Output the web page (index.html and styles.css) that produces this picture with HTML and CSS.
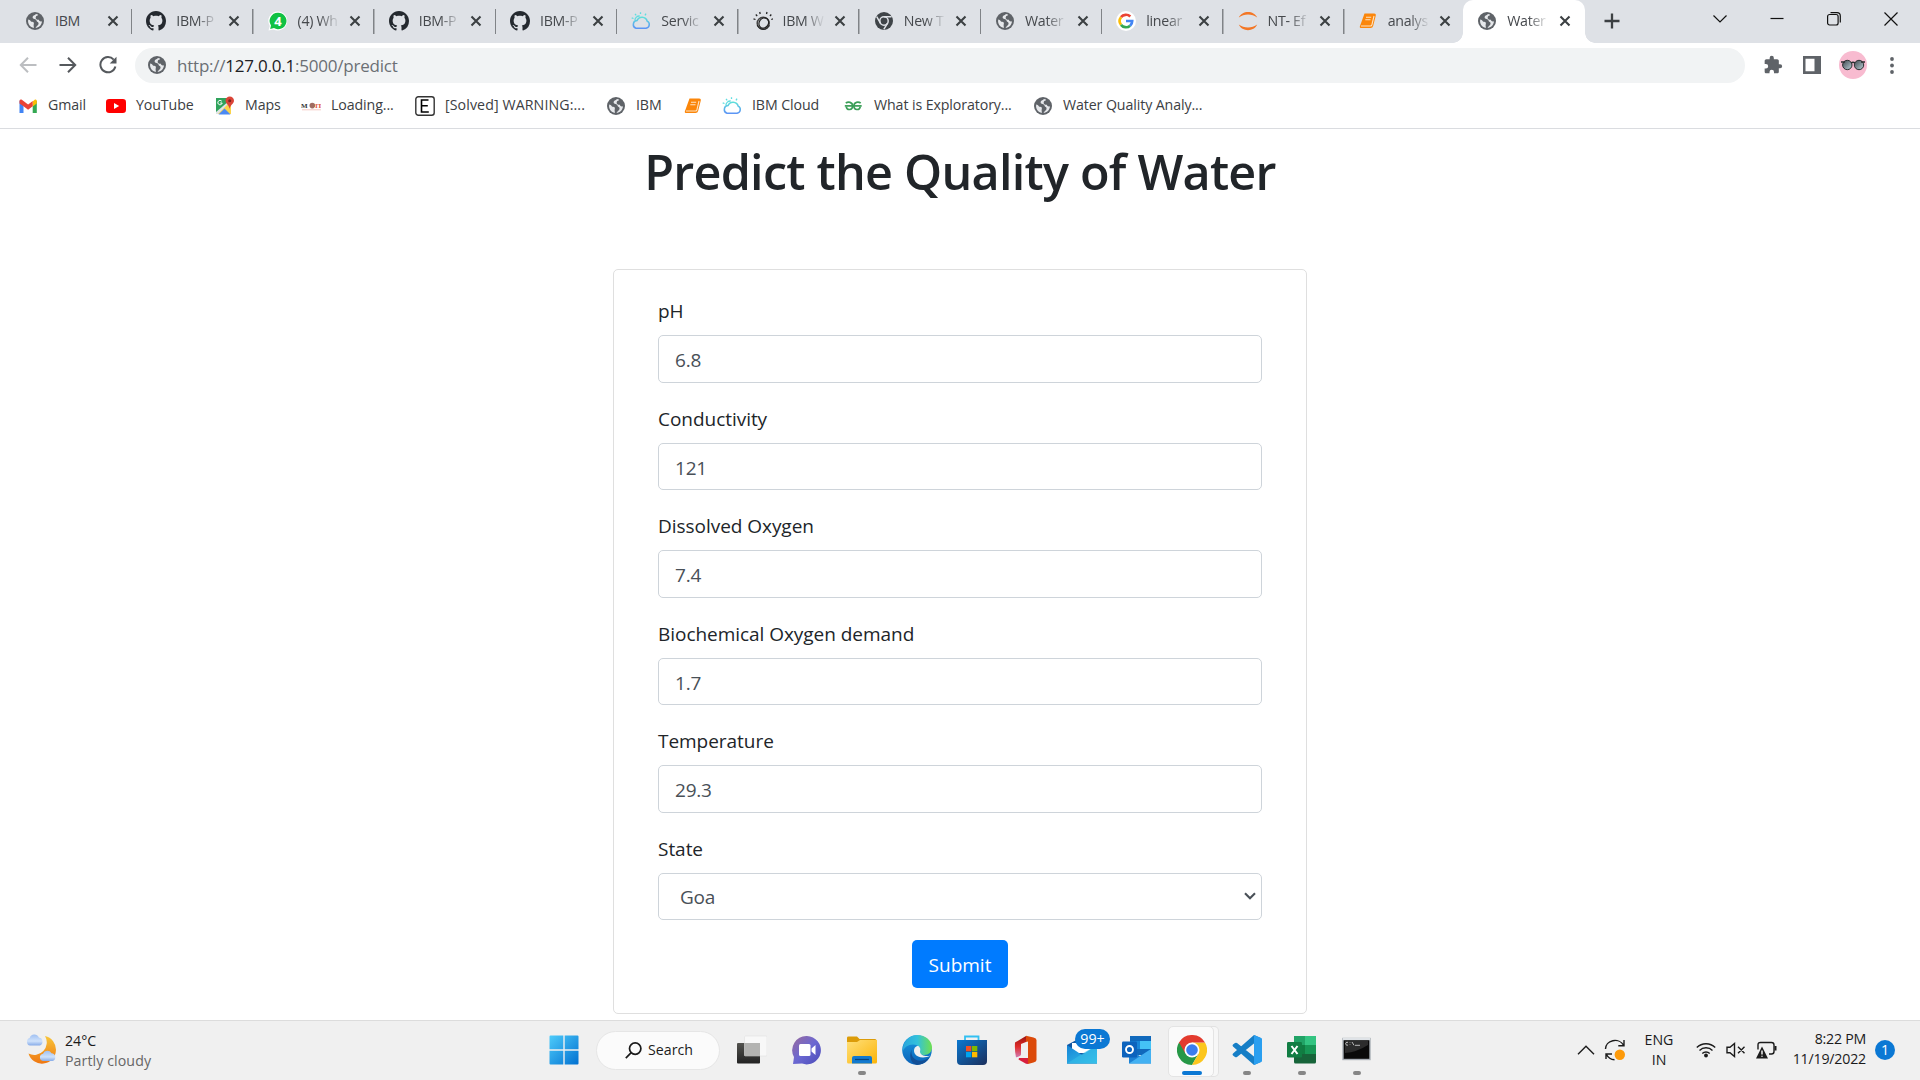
FILE: index.html
```html
<!DOCTYPE html>
<html lang="en">
<head>
<meta charset="utf-8">
<title>Water Quality</title>
<link rel="stylesheet" href="styles.css">
</head>
<body>
<svg class="defs" width="0" height="0" aria-hidden="true">
  <defs>
    <linearGradient id="g-cloud" x1="0" y1="0" x2="0" y2="1"><stop offset="0" stop-color="#5fe0da"/><stop offset="1" stop-color="#5c95f5"/></linearGradient>
    <linearGradient id="g-win" gradientUnits="userSpaceOnUse" x1="0" y1="0" x2="30" y2="30"><stop offset="0" stop-color="#4fcdfb"/><stop offset="1" stop-color="#006fd0"/></linearGradient>
    <linearGradient id="g-moon" x1="0" y1="0" x2="0" y2="1"><stop offset="0" stop-color="#f8c63a"/><stop offset="1" stop-color="#ef7712"/></linearGradient>
    <linearGradient id="g-wc" x1="0" y1="0" x2="0" y2="1"><stop offset="0" stop-color="#a0c0f2"/><stop offset=".6" stop-color="#cfe2fb"/><stop offset="1" stop-color="#86abe8"/></linearGradient>
    <linearGradient id="g-chat" x1="0" y1="0" x2="1" y2="1"><stop offset="0" stop-color="#9a6a9c"/><stop offset=".5" stop-color="#6b68d2"/><stop offset="1" stop-color="#4b4bb8"/></linearGradient>
    <linearGradient id="g-fold" x1="0" y1="0" x2="1" y2="1"><stop offset="0" stop-color="#ffe07a"/><stop offset="1" stop-color="#fbb408"/></linearGradient>
    <linearGradient id="g-edge1" x1="0" y1="0" x2="1" y2="0"><stop offset="0" stop-color="#2aa5dc"/><stop offset=".5" stop-color="#33c1dc"/><stop offset="1" stop-color="#6fe04f"/></linearGradient>
    <linearGradient id="g-edge2" x1="0" y1="0" x2="0" y2="1"><stop offset="0" stop-color="#1b9de2"/><stop offset="1" stop-color="#0b62b8"/></linearGradient>
    <linearGradient id="g-store" x1="0" y1="0" x2="1" y2="1"><stop offset="0" stop-color="#0a78d0"/><stop offset="1" stop-color="#1c2f5c"/></linearGradient>
    <linearGradient id="g-mail" x1="0" y1="0" x2="1" y2="1"><stop offset="0" stop-color="#1482d6"/><stop offset="1" stop-color="#38c4ea"/></linearGradient>
    <linearGradient id="g-off" x1="0" y1="0" x2="0" y2="1"><stop offset="0" stop-color="#9c1410"/><stop offset=".5" stop-color="#e02d2b"/><stop offset="1" stop-color="#d27bb3"/></linearGradient>
    <linearGradient id="g-dark" x1="0" y1="0" x2="0" y2="1"><stop offset="0" stop-color="#53534f"/><stop offset="1" stop-color="#222"/></linearGradient>
    <linearGradient id="g-lens" x1="0" y1="0" x2="1" y2="1"><stop offset="0" stop-color="#3f474d"/><stop offset="1" stop-color="#bcd0d8"/></linearGradient>
    <symbol id="globe" viewBox="0 0 18 18"><circle cx="9" cy="9" r="9" fill="#5f6368"/><path d="M10 2C8.600 3.600 6.500 3.400 6.600 5.500C6.700 7.400 10.200 6.400 10.500 8.600C10.700 10.300 13 9.800 12.500 12C12.200 13.500 10.500 14.200 9.500 15.900C12.900 15.700 15.800 12.900 16 9.200C14.700 9.800 13.100 9.400 12.900 7.800C10.800 7.700 9.400 7 9.700 5.200C9.900 3.700 11.800 4 12.200 2.800C11.500 2.300 10.800 2.100 10 2ZM2.200 7.500C4.800 7.800 4.200 9.600 6 9.800C7.800 10 8.300 11 7.700 12.500C7.400 13.400 8 14.600 7.800 15.900C4.400 15.300 1.400 12.100 2.200 7.500Z" fill="#e6e8eb"/></symbol>
    <symbol id="github" viewBox="0 0 16 16"><path fill="#24292f" d="M8 0C3.580 0 0 3.580 0 8c0 3.540 2.290 6.530 5.470 7.590.4.070.55-.17.55-.38 0-.19-.01-.82-.01-1.490-2.010.37-2.530-.49-2.690-.94-.09-.23-.48-.94-.82-1.130-.28-.15-.68-.52-.01-.53.63-.01 1.080.58 1.230.82.72 1.210 1.870.87 2.330.66.07-.52.28-.87.51-1.070-1.780-.2-3.640-.89-3.640-3.950 0-.87.31-1.590.82-2.150-.08-.2-.36-1.020.08-2.120 0 0 .67-.21 2.200.82.64-.18 1.320-.27 2-.27s1.360.09 2 .27c1.530-1.040 2.200-.82 2.200-.82.44 1.100.16 1.920.08 2.120.51.56.82 1.270.82 2.150 0 3.070-1.870 3.750-3.650 3.950.29.25.54.73.54 1.480 0 1.070-.01 1.930-.01 2.200 0 .21.15.46.55.38A8.010 8.010 0 0 0 16 8c0-4.420-3.580-8-8-8z"/></symbol>
    <symbol id="cloud" viewBox="0 0 20 18"><path d="M5 16.200H15A3.700 3.700 0 0 0 16.200 9.200A5.400 5.400 0 0 0 6 8.600A3.900 3.900 0 0 0 5 16.200Z" fill="none" stroke="url(#g-cloud)" stroke-width="1.500"/><path d="M3.900 8.300A4.600 4.600 0 0 1 8.700 4M5.200 3.300L4 1.800M9.500 2V.2M2.500 6.500L.7 5.800M14 3.300L15 1.700" fill="none" stroke="#5fdde0" stroke-width="1.300"/></symbol>
    <symbol id="watson" viewBox="0 0 20 20"><circle cx="10.200" cy="12.300" r="6" fill="none" stroke="#444" stroke-width="1.500"/><ellipse cx="10.800" cy="12" rx="4.600" ry="5.400" fill="none" stroke="#222" stroke-width="1.200" transform="rotate(35 10.800 12)"/><path d="M4.200 14C6 19.500 14 20 16.500 14.500" fill="none" stroke="#222" stroke-width="1"/><path d="M4.200 5L2.800 3.500M7.200 3L6.700 1M13.500 3L14 1M17 5L18.300 3.500M2.500 8.500L.5 7.900M18.300 8.500L20 7.900" fill="none" stroke="#222" stroke-width="1.300"/></symbol>
    <symbol id="close" viewBox="0 0 12 12"><path d="M1.500 1.500L10.500 10.500M10.500 1.500L1.500 10.500" stroke="#3c4043" stroke-width="2.100"/></symbol>
    <symbol id="book" viewBox="0 0 18 17"><path d="M5.500 1H15.200Q17.300 1 16.800 3L14.200 13.300Q13.700 15.600 11.500 15.600H2Q.5 15.600.8 14Z" fill="#fb860a"/><path d="M7 4.700H12.200M6.300 7.300H11.500M2 13.500H11.500Q12.600 13.500 13 12L15 3.500" stroke="#ffe3c2" stroke-width="1.100" fill="none"/></symbol>
    <symbol id="chromeline" viewBox="0 0 18 18"><circle cx="9" cy="9" r="9" fill="#3f4448"/><circle cx="9" cy="9" r="4.200" fill="none" stroke="#dee1e6" stroke-width="1.500"/><path d="M9 4.800H16.500M5.400 11.100L1.700 4.700M12.600 11.100L8.800 17.300" stroke="#dee1e6" stroke-width="1.500"/></symbol>
    <symbol id="chrome" viewBox="0 0 30 30"><path d="M2 7.500A15 15 0 0 0 15 30L21.500 18.700L15 15Z" fill="#279847"/><path d="M28 7.500A15 15 0 0 1 15 30L21.500 18.700L15 7.500Z" fill="#fcc61d"/><path d="M2 7.500L8.500 18.800L15 15V7.500Z" fill="#279847"/><path d="M2 7.500A15 15 0 0 1 28 7.500H15L8.500 11Z" fill="#e33b2e"/><path d="M2 7.500L8.500 18.800V11L15 7.500L12 4Z" fill="#e33b2e"/><circle cx="15" cy="15" r="7.500" fill="#fff"/><circle cx="15" cy="15" r="5.800" fill="#3b7ded"/></symbol>
  </defs>
</svg>

<header class="browser">
  <div class="tabstrip">
    <div class="tab"><svg class="fav"><use href="#globe"/></svg><span class="tab-title">IBM</span><svg class="x"><use href="#close"/></svg></div>
    <div class="tab"><svg class="fav big"><use href="#github"/></svg><span class="tab-title">IBM-P</span><svg class="x"><use href="#close"/></svg></div>
    <div class="tab"><svg class="fav big" viewBox="0 0 20 20"><path d="M10 .5A9.500 9.500 0 1 1 5.500 18.500L.5 19.500L1.800 15A9.500 9.500 0 0 1 10 .5Z" fill="#fff"/><path d="M10 1.800A8.200 8.200 0 1 1 6 17L2.200 18L3 14.500A8.200 8.200 0 0 1 10 1.800Z" fill="#10c143"/><text x="10" y="14.800" text-anchor="middle" class="wa-num">4</text></svg><span class="tab-title">(4) Wh</span><svg class="x"><use href="#close"/></svg></div>
    <div class="tab"><svg class="fav big"><use href="#github"/></svg><span class="tab-title">IBM-P</span><svg class="x"><use href="#close"/></svg></div>
    <div class="tab"><svg class="fav big"><use href="#github"/></svg><span class="tab-title">IBM-P</span><svg class="x"><use href="#close"/></svg></div>
    <div class="tab"><svg class="fav big"><use href="#cloud"/></svg><span class="tab-title">Servic</span><svg class="x"><use href="#close"/></svg></div>
    <div class="tab"><svg class="fav big"><use href="#watson"/></svg><span class="tab-title">IBM W</span><svg class="x"><use href="#close"/></svg></div>
    <div class="tab"><svg class="fav"><use href="#chromeline"/></svg><span class="tab-title">New T</span><svg class="x"><use href="#close"/></svg></div>
    <div class="tab"><svg class="fav"><use href="#globe"/></svg><span class="tab-title">Water</span><svg class="x"><use href="#close"/></svg></div>
    <div class="tab"><svg class="fav big" viewBox="0 0 20 20"><circle cx="10" cy="10" r="10" fill="#fff"/><g fill="none" stroke-width="2.700"><path d="M5 6.200A6.300 6.300 0 0 1 14.300 5.500" stroke="#ea4335"/><path d="M5 6.200A6.300 6.300 0 0 0 5 13.800" stroke="#fbbc05"/><path d="M5 13.800A6.300 6.300 0 0 0 14.100 14.700" stroke="#34a853"/><path d="M14.100 14.700A6.300 6.300 0 0 0 16.200 10H10" stroke="#4285f4"/></g></svg><span class="tab-title">linear</span><svg class="x"><use href="#close"/></svg></div>
    <div class="tab"><svg class="fav big" viewBox="0 0 20 20"><path d="M.8 6.500C4-1 16-1 19.200 6.500C14 2.500 6 2.500.8 6.500ZM.8 13.500C4 21 16 21 19.200 13.500C14 17.500 6 17.500.8 13.500Z" fill="#f37726"/></svg><span class="tab-title">NT- Ef</span><svg class="x"><use href="#close"/></svg></div>
    <div class="tab last"><svg class="fav"><use href="#book"/></svg><span class="tab-title">analys</span><svg class="x"><use href="#close"/></svg></div>
    <div class="tab active"><svg class="fav"><use href="#globe"/></svg><span class="tab-title">Water</span><svg class="x"><use href="#close"/></svg></div>
    <svg class="newtab" viewBox="0 0 16 16"><path d="M8 .5V15.500M.5 8H15.500" stroke="#3c4043" stroke-width="2.300"/></svg>
    <div class="winctl">
      <svg width="14" height="14" viewBox="0 0 14 14"><path d="M.5 3.500L7 10L13.500 3.500"/></svg>
      <svg width="14" height="14" viewBox="0 0 14 14"><path d="M.5 6.500H13.500"/></svg>
      <svg width="14" height="14" viewBox="0 0 14 14"><rect x=".6" y="2.500" width="10.500" height="10.500" rx="2"/><path d="M3.500.7H10Q13.300.7 13.300 4V10.500"/></svg>
      <svg width="14" height="14" viewBox="0 0 14 14"><path d="M.5.5L13.500 13.500M13.500.5L.5 13.500"/></svg>
    </div>
  </div>
  <div class="toolbar">
    <svg class="nav dim" viewBox="0 0 18 16"><path d="M17.500 8H2M9 .8L1.800 8L9 15.200"/></svg>
    <svg class="nav" viewBox="0 0 18 16"><path d="M.5 8H16M9 .8L16.200 8L9 15.200"/></svg>
    <svg class="nav reload" viewBox="0 0 18 18"><path d="M14.700 3.600A7.600 7.600 0 1 0 16.400 10.500"/><path class="solid" d="M17.500.7V7.500H10.700Z"/></svg>
    <div class="omnibox"><svg class="fav"><use href="#globe"/></svg><span class="url">http://<b>127.0.0.1</b>:5000/predict</span></div>
    <svg class="ext" viewBox="0 0 24 24"><path d="M20.500 11H19V7c0-1.100-.9-2-2-2h-4V3.500a2.500 2.500 0 0 0-5 0V5H4c-1.100 0-2 .9-2 2v3.800h1.500a2.700 2.700 0 0 1 0 5.400H2V20c0 1.100.9 2 2 2h3.800v-1.500a2.700 2.700 0 0 1 5.400 0V22H17c1.100 0 2-.9 2-2v-4h1.500a2.500 2.500 0 0 0 0-5z" fill="#5f6368"/></svg>
    <svg class="side" viewBox="0 0 18 18"><path d="M0 0H18V18H0ZM2.500 2.800V15.200H11.500V2.800Z" fill="#5f6368" fill-rule="evenodd"/></svg>
    <svg class="avatar" viewBox="0 0 28 28"><circle cx="14" cy="14" r="14" fill="#f8bbd0"/><g fill="url(#g-lens)" stroke="#2c2f31" stroke-width="1"><circle cx="8.300" cy="14" r="4.700"/><circle cx="20" cy="14" r="4.700"/></g><path d="M2 11H6M12 12Q14 10.500 16 12M22 11H26" stroke="#2c2f31" stroke-width="1.600" fill="none"/></svg>
    <svg class="menu" viewBox="0 0 4 17"><circle cx="2" cy="2" r="1.900"/><circle cx="2" cy="8.500" r="1.900"/><circle cx="2" cy="15" r="1.900"/></svg>
  </div>
  <nav class="bookmarks">
    <a><svg class="bi" viewBox="0 0 20 20"><path d="M1.500 4.500V17H5.500V8.500Z" fill="#4285f4"/><path d="M18.800 4.500V17H14.700V8.500Z" fill="#34a853"/><path d="M14.700 5.500L17 3.500Q18.800 3 18.800 5V7.500L14.700 10.500Z" fill="#fbbc04"/><path d="M1.500 7.500V5Q1.500 3 3.500 3.600L10.100 8.500L14.700 5V10.300L10.100 13.800L5.500 10.300Z" fill="#ea4335"/></svg><span>Gmail</span></a>
    <a><svg class="bi" viewBox="0 0 20 20"><rect x="0" y="3" width="20" height="14" rx="3.200" fill="#f00"/><path d="M8 7V13L13.200 10Z" fill="#fff"/></svg><span>YouTube</span></a>
    <a><svg class="bi" viewBox="0 0 20 20"><rect x="1" y="2" width="15" height="16" fill="#2fa35b"/><path d="M1 18L16 3V18Z" fill="#fbd34a"/><path d="M1 16V18H3L14 7V5Z" fill="#dfe3e6"/><path d="M3.500 18.500L9.500 12.500L15.500 18.500Z" fill="#4a89f3"/><path d="M14.500 13.500C14.500 9 10.500 8 10.500 4.800A4.200 4.200 0 0 1 19 4.800C19 8 14.800 9 14.500 13.500Z" fill="#db4437"/><circle cx="14.700" cy="4.700" r="1.500" fill="#7b231e"/><path d="M6.800 5.300A2.200 2.200 0 1 0 7.200 7H5.200" stroke="#fff" fill="none" stroke-width="1"/></svg><span>Maps</span></a>
    <a><svg class="bi" viewBox="0 0 20 20"><text x="0" y="12" class="mbit">M</text><circle cx="11.300" cy="9.600" r="2.800" fill="#a06d62"/><text x="14" y="12" class="mbit red">IT</text><path d="M1 13.800H20" stroke="#f3bcb5" stroke-width=".8"/></svg><span>Loading...</span></a>
    <a><svg class="bi" viewBox="0 0 20 20"><rect x=".8" y=".8" width="18.400" height="18.400" rx="2.500" fill="#fff" stroke="#333" stroke-width="1.400"/><path d="M13.500 4H6.500V16H13.800M6.500 9.800H12.800" stroke="#000" stroke-width="1.600" fill="none"/></svg><span class="wide">[Solved] WARNING:...</span></a>
    <a><svg class="bi g"><use href="#globe"/></svg><span>IBM</span></a>
    <a><svg class="bi g"><use href="#book"/></svg></a>
    <a><svg class="bi"><use href="#cloud"/></svg><span>IBM Cloud</span></a>
    <a><svg class="bi" viewBox="0 0 20 20"><g fill="none" stroke="#3a9e57" stroke-width="1.700"><path d="M1.800 7.200C4 5.300 8.600 5.800 8.600 10C8.600 14.300 3 14.800 2.200 10.600"/><path d="M16.700 7.200C14.500 5.300 9.900 5.800 9.900 10C9.900 14.300 15.500 14.800 16.300 10.600"/><path d="M.8 9.900H17.700"/></g></svg><span>What is Exploratory...</span></a>
    <a><svg class="bi g"><use href="#globe"/></svg><span>Water Quality Analy...</span></a>
  </nav>
</header>

<main class="page">
  <h1>Predict the Quality of Water</h1>
  <form class="card">
    <div class="group"><label>pH</label><div class="control">6.8</div></div>
    <div class="group"><label>Conductivity</label><div class="control">121</div></div>
    <div class="group"><label>Dissolved Oxygen</label><div class="control">7.4</div></div>
    <div class="group"><label>Biochemical Oxygen demand</label><div class="control">1.7</div></div>
    <div class="group"><label>Temperature</label><div class="control">29.3</div></div>
    <div class="group"><label>State</label><div class="control select"><span>Goa</span><svg width="12" height="8" viewBox="0 0 12 8"><path d="M1 1.200L6 6.200L11 1.200" fill="none" stroke="#495057" stroke-width="2.100"/></svg></div></div>
    <button type="button" class="submit">Submit</button>
  </form>
</main>

<footer class="taskbar">
  <div class="weather">
    <svg width="31" height="30" viewBox="0 0 31 30"><path d="M19 2A14 14 0 1 1 2.500 19.500A12.500 12.500 0 0 0 19 2Z" fill="url(#g-moon)"/><path d="M4 11.500A3.900 3.900 0 0 1 3.600 4A5 5 0 0 1 12.900 3.500A4.200 4.200 0 0 1 14 11.500Z" fill="url(#g-wc)"/><path d="M17 27A3.700 3.700 0 0 1 17 19.700A4.800 4.800 0 0 1 25.500 19.200A4 4 0 0 1 26.500 27Z" fill="url(#g-wc)"/></svg>
    <div><p>24°C</p><p class="muted">Partly cloudy</p></div>
  </div>
  <div class="apps">
    <div class="app"><svg viewBox="0 0 30 30"><path d="M.5 1.500Q.5.500 1.500.5H14.300V14.300H.5ZM15.700.5H28.500Q29.500.5 29.500 1.500V14.300H15.700ZM.5 15.700H14.300V29.500H1.500Q.5 29.500.5 28.500ZM15.700 15.700H29.500V28.500Q29.500 29.500 28.500 29.500H15.700Z" fill="url(#g-win)"/></svg></div>
    <div class="search"><svg width="17" height="17" viewBox="0 0 17 17"><circle cx="10.200" cy="6.600" r="5.700"/><path d="M6.200 10.700L.8 16.200"/></svg><span>Search</span></div>
    <div class="app"><svg viewBox="0 0 30 30"><rect x="0" y="8" width="23" height="20.500" rx="1" fill="url(#g-dark)"/><rect x="7.500" y="1" width="22.500" height="20" rx="1" fill="#f8f8f8" stroke="#ddd" stroke-width=".5"/><rect x="7.500" y="8" width="15.500" height="13" fill="#b3b3b1"/></svg></div>
    <div class="app"><svg viewBox="0 0 30 30"><path d="M15 1A14.200 14.200 0 1 1 10 28.600L1 29L2 22A14.200 14.200 0 0 1 15 1Z" fill="url(#g-chat)"/><rect x="7" y="9" width="11.500" height="12" rx="1.500" fill="#fff"/><path d="M19.500 13.500L23.500 10V20L19.500 16.500Z" fill="#fff"/></svg></div>
    <div class="app run"><svg viewBox="0 0 30 30"><path d="M0 2.800Q0 1.500 1.500 1.500H10L12.500 4H28Q29.500 4 29.500 5.500V12H0Z" fill="#dc9c09"/><path d="M0 7H10L13 5H30V27Q30 28.500 28.500 28.500H1.500Q0 28.500 0 27Z" fill="url(#g-fold)"/><path d="M5 28.500V23Q5 21 7 21H23Q25 21 25 23V28.500Z" fill="#1279ce"/><path d="M8 24.500H22" stroke="#07437d" stroke-width="1.200"/></svg></div>
    <div class="app"><svg viewBox="0 0 30 30"><circle cx="15" cy="15" r="14.800" fill="url(#g-edge2)"/><path d="M1 12C3 4 9 0 15 0C24 0 30 6 30 12.500C30 17 26.500 20 22.500 20C19 20 17 18.500 18 16.500C19.500 13 16 9.500 11 9.500C6 9.500 2 12.500.5 17Z" fill="url(#g-edge1)"/><path d="M11.500 12C8 15 9 22 13.500 24.500C18 27 24 25.500 27.500 22C25 27 20 29.900 15 29.900C8 29 6 18 11.500 12Z" fill="#124f96"/><path d="M16 10.800C12 11.500 11 16 13 19C15.500 22.500 22 24 28.500 20.500C24.500 22 18 20.500 18 16.500C19 14.500 18 12 16 10.800Z" fill="#f0f0f0"/></svg></div>
    <div class="app"><svg viewBox="0 0 30 30"><path d="M8 6V1.500H21.500V6" fill="none" stroke="#32c0f2" stroke-width="1.800"/><path d="M0 5H30V26Q30 30 26 30H4Q0 30 0 26Z" fill="url(#g-store)"/><rect x="9" y="11" width="5.300" height="5.300" fill="#f25022"/><rect x="15" y="11" width="5.300" height="5.300" fill="#7fba00"/><rect x="9" y="17" width="5.300" height="5.300" fill="#00a4ef"/><rect x="15" y="17" width="5.300" height="5.300" fill="#ffb900"/></svg></div>
    <div class="app"><svg viewBox="0 0 30 30"><path d="M3 7.500L14 1V7L9 9V19.500Q9 21 4 22.500Q2.500 16 3 7.500Z" fill="url(#g-off)"/><path d="M14 .8L21.500 2.500Q24.500 3.300 24.500 5V25Q24.500 26.500 21.500 27.500L16 29V6.500L14 7Z" fill="#dc4a0a"/><path d="M7 23H16V29L14 28.700L6.500 24.500Z" fill="#d81f3d"/></svg></div>
    <div class="app"><svg viewBox="0 0 30 30"><path d="M0 10L15 2L30 10V28.500H0Z" fill="#1057a3"/><path d="M5 8H25V18H5Z" fill="#fff"/><path d="M0 10L15 20L30 10V28.500H0Z" fill="url(#g-mail)"/><path d="M0 28.500L18 17L30 10V28.500Z" fill="#36bce8" opacity=".6"/></svg><span class="count">99+</span></div>
    <div class="app"><svg viewBox="0 0 30 30"><path d="M8 1H29V20H8Z" fill="#1069bc"/><path d="M8 6H18V14H8Z" fill="#1886d8"/><path d="M18 6H29V14H18Z" fill="#44c3f6"/><path d="M7 15L18 21L29 14V28.500H7Z" fill="#1d82d4"/><path d="M7 28.500L29 14V28.500Z" fill="#43b1f2"/><rect x="0" y="6.500" width="15" height="16" rx="1.200" fill="#0d63bd"/><circle cx="7.500" cy="14.500" r="3.500" fill="none" stroke="#fff" stroke-width="1.900"/></svg></div>
    <div class="app current"><svg viewBox="0 0 30 30"><use href="#chrome"/></svg></div>
    <div class="app run"><svg viewBox="0 0 30 30"><path d="M22 0L29 3V27L22 30L1 11.500Q0 10.500 1 9.500L3 8Q4 7.500 5 8L22 21.500V8.500L5 22Q4 22.500 3 22L1 20.500Q0 19.500 1 18.500Z" fill="#167ec6"/><path d="M22 0L30 3.500V26.500L22 30Z" fill="#2a9ff0"/></svg></div>
    <div class="app run"><svg viewBox="0 0 30 30"><rect x="7" y="1" width="22" height="27.500" rx="1.500" fill="#17643a"/><path d="M7 1H18V10H7Z" fill="#21a366"/><path d="M18 1H29V10H18Z" fill="#33c481"/><path d="M18 10H29V19H18Z" fill="#179655"/><path d="M7 10H18V19H7Z" fill="#107c41"/><rect x="0" y="7" width="15" height="15.500" rx="1.200" fill="#117d43"/><path d="M4.500 11L10.500 19M10.500 11L4.500 19" stroke="#fff" stroke-width="2"/></svg></div>
    <div class="app run"><svg viewBox="0 0 30 30"><rect x="1" y="3.500" width="27" height="21" fill="#0a0a0a" stroke="#a9afb6" stroke-width="1.400"/><rect x="1" y="3" width="27" height="2.200" fill="#dfe3e7"/><path d="M3 6H26V10Q15 17 3 18Z" fill="#2c2c2c"/><path d="M6 7.500A1.500 1.500 0 1 0 6 10M8 7.500V8M8 9.500V10M10 7L12 10.300M13 10.300H18" stroke="#ddd" fill="none" stroke-width=".8"/></svg></div>
  </div>
  <div class="tray">
    <svg class="ln" width="18" height="10" viewBox="0 0 18 10"><path d="M1 9.200L9 1.200L17 9.200"/></svg>
    <svg class="ln upd" width="22" height="22" viewBox="0 0 22 22"><path d="M1.500 10A9.500 8.500 0 0 1 19.500 6.200M20 1V6.700H14.300M2 20V15H8M2.500 15.500Q5 20.500 10.500 20.700"/><circle cx="15.800" cy="15.800" r="5.200" class="dot"/></svg>
    <div class="lang"><p>ENG</p><p>IN</p></div>
    <svg class="ln wifi" width="20" height="16" viewBox="0 0 20 16"><path d="M.8 5.500A13 13 0 0 1 19.200 5.500M3.500 8.500A9.200 9.200 0 0 1 16.500 8.500M6.300 11.500A5.300 5.300 0 0 1 13.700 11.500"/><circle cx="10" cy="13.500" r="1.900" class="ink"/></svg>
    <svg class="ln vol" width="20" height="16" viewBox="0 0 20 16"><path d="M1 5.300H4L8.500 1.500V14.500L4 10.700H1ZM12 4.800L18.500 11.300M18.500 4.800L12 11.300"/></svg>
    <svg class="ln bat" width="22" height="20" viewBox="0 0 22 20"><path d="M2 9.500V5Q2 2.500 4.500 2.500H15.500Q18 2.500 18 5V11.500Q18 14 15.500 14H13"/><path class="ink" d="M18.500 6H20.500V10.500H18.500Z"/><path class="ink" d="M6 6.500L12 18.500H0Z"/><path d="M6 10.500V14.500M6 15.700V16.800" class="w"/></svg>
    <div class="clock"><p>8:22 PM</p><p>11/19/2022</p></div>
    <span class="notif">1</span>
  </div>
</footer>
</body>
</html>
```
FILE: styles.css
```css
* { box-sizing: border-box; }
body {
  margin: 0;
  width: 1920px;
  height: 1080px;
  overflow: hidden;
  display: flex;
  flex-direction: column;
  background: #fff;
  font-family: "Open Sans", "Noto Sans", sans-serif;
  color: #212529;
}
p { margin: 0; }
svg { flex: none; display: block; }
.defs { position: absolute; }

/* Browser chrome */
.browser { height: 129px; border-bottom: 1px solid #dadce0; }
.tabstrip {
  display: flex;
  height: 43px;
  padding-left: 11px;
  background: #dee1e6;
}
.tab {
  width: 121.250px;
  height: 43px;
  display: flex;
  align-items: center;
  padding: 0 0 1px 15px;
  background: linear-gradient(#808387, #808387) right 0 top 9px / 1.500px 25px no-repeat;
}
.tab.last { background: none; width: 118.500px; padding-left: 14px; }
.tab.active {
  position: relative;
  background: #fff;
  border-radius: 10px 10px 0 0;
}
.tab.active::before, .tab.active::after {
  content: "";
  position: absolute;
  bottom: 0;
  left: -10px;
  width: 10px;
  height: 10px;
  background: radial-gradient(circle at 0 0, transparent 9.500px, #fff 10px);
}
.tab.active::after { left: 100%; transform: scaleX(-1); }
.fav { width: 18px; height: 18px; margin-right: 11px; }
.fav.big { width: 20px; height: 20px; margin: 0 10px 0 -1px; }
.tab-title {
  width: 42px;
  white-space: nowrap;
  font-size: 14.200px;
  line-height: 20px;
  padding-bottom: 1px;
  letter-spacing: -.3px;
  color: #45484c;
  -webkit-mask-image: linear-gradient(90deg, #000 50%, transparent 100%);
  mask-image: linear-gradient(90deg, #000 50%, transparent 100%);
}
.tab:first-child .tab-title { -webkit-mask-image: none; mask-image: none; }
.x { width: 12px; height: 12px; margin-left: 9.500px; }
.wa-num { font: bold 13px "Open Sans", sans-serif; fill: #fff; }
.newtab { width: 16px; height: 16px; margin: 13px 0 0 19px; }
.winctl { display: flex; gap: 43px; margin: 12px 0 0 93.500px; }
.winctl svg { fill: none; stroke: #111; stroke-width: 1.200; }

.toolbar {
  display: flex;
  align-items: center;
  height: 44px;
  padding: 0 22px 0 19px;
}
.nav { width: 18px; height: 16px; margin-right: 22px; fill: none; stroke: #55595d; stroke-width: 2; }
.nav.dim { stroke: #bcbec1; }
.nav.reload { width: 18px; height: 18px; margin-right: 18px; }
.nav .solid { fill: #55595d; stroke: none; }
.omnibox {
  display: flex;
  align-items: center;
  width: 1610px;
  height: 35px;
  padding-left: 13px;
  border-radius: 18px;
  background: #f1f3f4;
}
.url { font-size: 17px; color: #6b6f74; white-space: nowrap; letter-spacing: -.22px; }
.url b { font-weight: 400; color: #202124; }
.ext { width: 20px; height: 20px; margin-left: 18px; }
.side { width: 18px; height: 18px; margin-left: 20px; }
.avatar { width: 28px; height: 28px; margin-left: 18px; }
.menu { width: 4px; height: 17px; margin-left: 23px; fill: #5f6368; }

.bookmarks {
  display: grid;
  grid-template-columns: 88px 109px 86px 114px 191px 77px 39px 122px 189px 250px;
  align-items: center;
  height: 38px;
  padding-left: 18px;
}
.bookmarks a { display: flex; align-items: center; font-size: 14.200px; line-height: 20px; color: #3c4043; white-space: nowrap; letter-spacing: -.1px; }
.bookmarks span { padding-bottom: 2px; }
.bookmarks .wide { letter-spacing: .1px; }
.bi { width: 20px; height: 20px; margin-right: 10px; }
.bi.g { width: 18px; height: 18px; margin: 0 11px 0 1px; }
.mbit { font: bold 7px "Liberation Serif", serif; fill: #333; }
.mbit.red { fill: #e0523f; }

/* Form page */
.page { flex: 1; display: flex; flex-direction: column; align-items: center; }
h1 {
  margin: 12px 0 68px;
  font-size: 48.500px;
  line-height: 60px;
  font-weight: 600;
  letter-spacing: -.75px;
  white-space: nowrap;
}
.card {
  display: flex;
  flex-direction: column;
  width: 694px;
  height: 745px;
  padding: 25px 44px;
  border: 1px solid #dfdfdf;
  border-radius: 5px;
  font-size: 19px;
}
.group { margin-bottom: 20px; }
.group label { display: block; height: 30px; line-height: 32px; margin-bottom: 10px; letter-spacing: -.04px; }
.control {
  height: 47.500px;
  line-height: 49px;
  padding-left: 16px;
  border: 1px solid #ced4da;
  border-radius: 5px;
  color: #495057;
  letter-spacing: -.2px;
}
.control.select { display: flex; align-items: center; justify-content: space-between; padding: 0 5px 0 21px; }
.control.select span { padding-top: 3px; }
.submit {
  align-self: center;
  width: 96px;
  height: 48px;
  padding: 2px 0 0;
  border: 0;
  border-radius: 5px;
  background: #007bff;
  color: #fff;
  font: 19px "Open Sans", sans-serif;
}

/* Taskbar */
.taskbar {
  display: grid;
  grid-template-columns: 536.500px 1040.500px 343px;
  height: 60px;
  border-top: 1px solid #dcdcdc;
  background: #f0f0f0;
  font-size: 14.200px;
  line-height: 20px;
  color: #1b1b1b;
}
.weather { display: flex; align-items: flex-start; padding: 10px 0 0 26px; }
.weather svg { margin: 3px 8px 0 0; }
.muted { color: #666; letter-spacing: .08px; }
.apps { display: flex; align-items: center; height: 58px; }
.app {
  position: relative;
  display: flex;
  align-items: center;
  justify-content: center;
  width: 55px;
  height: 59px;
}
.app > svg { width: 30px; height: 30px; }
.app.run::after, .app.current::after {
  content: "";
  position: absolute;
  bottom: 5px;
  left: 23.500px;
  width: 8px;
  height: 4px;
  border-radius: 2px;
  background: #868686;
}
.app.current::after { left: 17.500px; width: 20px; background: #0b78d4; }
.app.current::before {
  content: "";
  position: absolute;
  left: 3px;
  top: 5px;
  width: 44px;
  height: 49px;
  border: 1px solid #e4e4e4;
  border-radius: 5px;
  background: #fafafa;
  box-shadow: 5px 0 0 -1px #f7f7f7, 5px 0 0 0 #e2e2e2;
}
.app.current > svg { position: relative; }
.search {
  display: flex;
  align-items: center;
  width: 124px;
  height: 39px;
  margin: 0 4.500px;
  padding-left: 28px;
  gap: 6px;
  border: 1px solid #e6e6e6;
  border-radius: 20px;
  background: #fbfbfb;
}
.search svg { fill: none; stroke: #1b1b1b; stroke-width: 1.700; }
.count {
  position: absolute;
  left: 20.500px;
  top: 8px;
  width: 35px;
  height: 20px;
  border-radius: 10px;
  background: #0b78d4;
  color: #fff;
  text-align: center;
}
.tray { display: flex; align-items: center; height: 58px; }
.ln { fill: none; stroke: #1b1b1b; stroke-width: 1.400; }
.ink { fill: #1b1b1b; stroke: none; }
.dot { fill: #fd9a0a; stroke: none; }
.w { stroke: #fff; }
.upd { margin-left: 9px; }
.lang { width: 40px; margin-left: 13px; padding-bottom: 1px; text-align: center; }
.wifi { margin-left: 17px; }
.vol { margin-left: 10px; }
.bat { margin-left: 10px; }
.clock { width: 80px; margin-left: 8px; padding-bottom: 2px; text-align: right; white-space: nowrap; letter-spacing: -.25px; }
.clock p:last-child { letter-spacing: -.45px; }
.clock p:last-child { letter-spacing: -.2px; }
.notif {
  width: 20px;
  height: 20px;
  margin-left: 9px;
  border-radius: 50%;
  background: #0b78d4;
  color: #fff;
  text-align: center;
}
```
